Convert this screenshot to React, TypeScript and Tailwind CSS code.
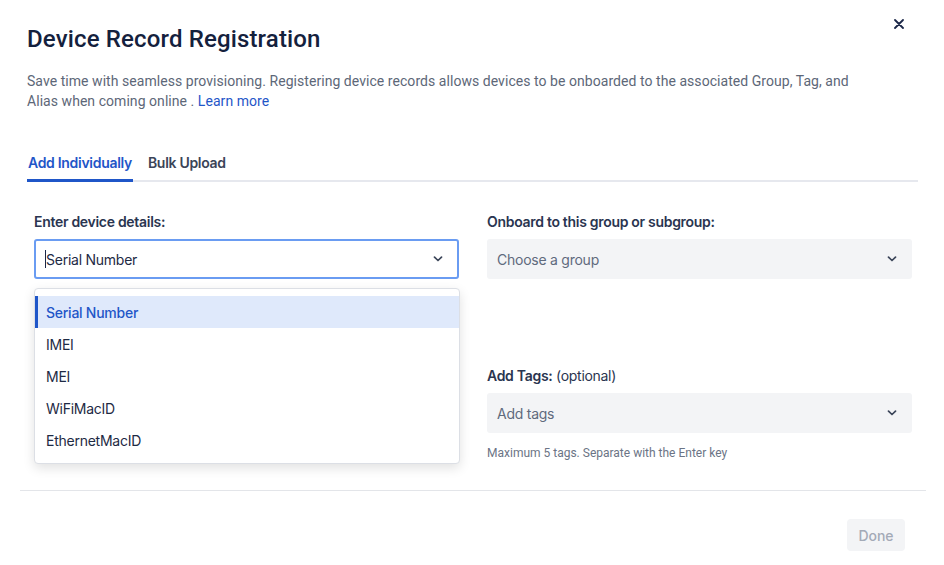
import React from "react";

function Chevron() {
  return (
    <svg width="10" height="6" viewBox="0 0 10 6" fill="none">
      <path d="M1.5 1.2 L5 4.5 L8.5 1.2" stroke="#3b4559" strokeWidth="1.7" strokeLinecap="round" strokeLinejoin="round" />
    </svg>
  );
}

export default function App() {
  const items = ["IMEI", "MEI", "WiFiMacID", "EthernetMacID"];
  return (
    <div className="w-[944px] h-[565px] bg-white relative overflow-hidden" style={{ fontFamily: "Inter, 'Noto Sans', sans-serif" }}>
      <button className="absolute left-[892px] top-[17px] w-[14px] h-[14px] flex items-center justify-center">
        <svg width="10" height="10" viewBox="0 0 10 10">
          <path d="M1 1 L9 9 M9 1 L1 9" stroke="#1b2748" strokeWidth="1.8" strokeLinecap="round" />
        </svg>
      </button>
      <div className="pl-[27px] pr-[26px]">
        <h1 className="pt-[24px] text-[24px] leading-[30px] font-medium text-[#14213d] tracking-[0.15px]" style={{ fontFamily: "Roboto, sans-serif" }}>
          Device Record Registration
        </h1>
        <p className="mt-[17px] text-[14px] leading-[20px] text-[#5d6778] w-[830px] tracking-[0.05px]" style={{ fontFamily: "Roboto, sans-serif" }}>
          Save time with seamless provisioning. Registering device records allows devices to be onboarded to the associated Group, Tag, and Alias when coming online .{" "}
          <span className="text-[#1f56c8]">Learn more</span>
        </p>
        <div className="mt-[42px] flex border-b-2 border-[#e6e8ee] w-[891px]">
          <div className="text-[14px] leading-[20px] font-semibold text-[#1f56c8] pb-[6px] border-b-[3px] border-[#1f56c8] mb-[-2px] pl-[1px] pr-[1px] tracking-[-0.3px]">Add Individually</div>
          <div className="ml-[15px] text-[14px] leading-[20px] font-semibold text-[#3b4457] tracking-[-0.3px]">Bulk Upload</div>
        </div>
        <div className="mt-[30px] flex pl-[7px]">
          <div className="w-[425px] relative">
            <div className="text-[14px] leading-[20px] font-semibold text-[#2a3550] tracking-[-0.3px]">Enter device details:</div>
            <div className="mt-[7px] h-[40px] border-2 border-[#6a9cf2] rounded-[3px] flex items-center pl-[9px] pr-[14px]">
              <span className="w-px h-[18px] bg-[#1b2748]" />
              <span className="text-[14px] text-[#1e2a44] flex-1 tracking-[-0.25px]">Serial Number</span>
              <Chevron />
            </div>
            <div className="absolute left-0 top-[76px] w-[426px] bg-white border border-[#dcdfe5] rounded-[4px] shadow-[0_4px_12px_rgba(0,0,0,0.12)] py-[7px] z-10">
              <div className="h-[32px] bg-[#dfe9fb] border-l-[3px] border-[#1f56c8] flex items-center pl-[8px] text-[14px] font-medium text-[#1f56c8] tracking-[-0.25px]">Serial Number</div>
              {items.map((t) => (
                <div key={t} className="h-[32px] flex items-center pl-[11px] text-[14px] text-[#1e2a44] tracking-[-0.25px]">{t}</div>
              ))}
            </div>
          </div>
          <div className="ml-[28px] w-[425px]">
            <div className="text-[14px] leading-[20px] font-semibold text-[#2a3550] tracking-[-0.3px]">Onboard to this group or subgroup:</div>
            <div className="mt-[7px] h-[40px] bg-[#f3f4f6] rounded-[3px] flex items-center pl-[10px] pr-[15px]">
              <span className="text-[14px] text-[#5f6a7d] flex-1 tracking-[-0.25px]">Choose a group</span>
              <Chevron />
            </div>
            <div className="mt-[87px] text-[14px] leading-[20px] text-[#2a3550] tracking-[-0.3px]">
              <span className="font-semibold">Add Tags:</span> (optional)
            </div>
            <div className="mt-[7px] h-[40px] bg-[#f3f4f6] rounded-[3px] flex items-center pl-[10px] pr-[15px]">
              <span className="text-[14px] text-[#5f6a7d] flex-1 tracking-[-0.25px]">Add tags</span>
              <Chevron />
            </div>
            <div className="mt-[12px] text-[12px] leading-[16px] text-[#6b7485]" style={{ fontFamily: "Roboto, sans-serif" }}>Maximum 5 tags. Separate with the Enter key</div>
          </div>
        </div>
      </div>
      <div className="mt-[29px] mx-[20px] h-px bg-[#e3e5e9] w-[906px]" />
      <div className="flex justify-end pr-[39px] mt-[28px]">
        <button className="w-[58px] h-[32px] bg-[#f3f4f6] rounded-[4px] text-[14px] font-medium text-[#a3aab7]">Done</button>
      </div>
    </div>
  );
}
